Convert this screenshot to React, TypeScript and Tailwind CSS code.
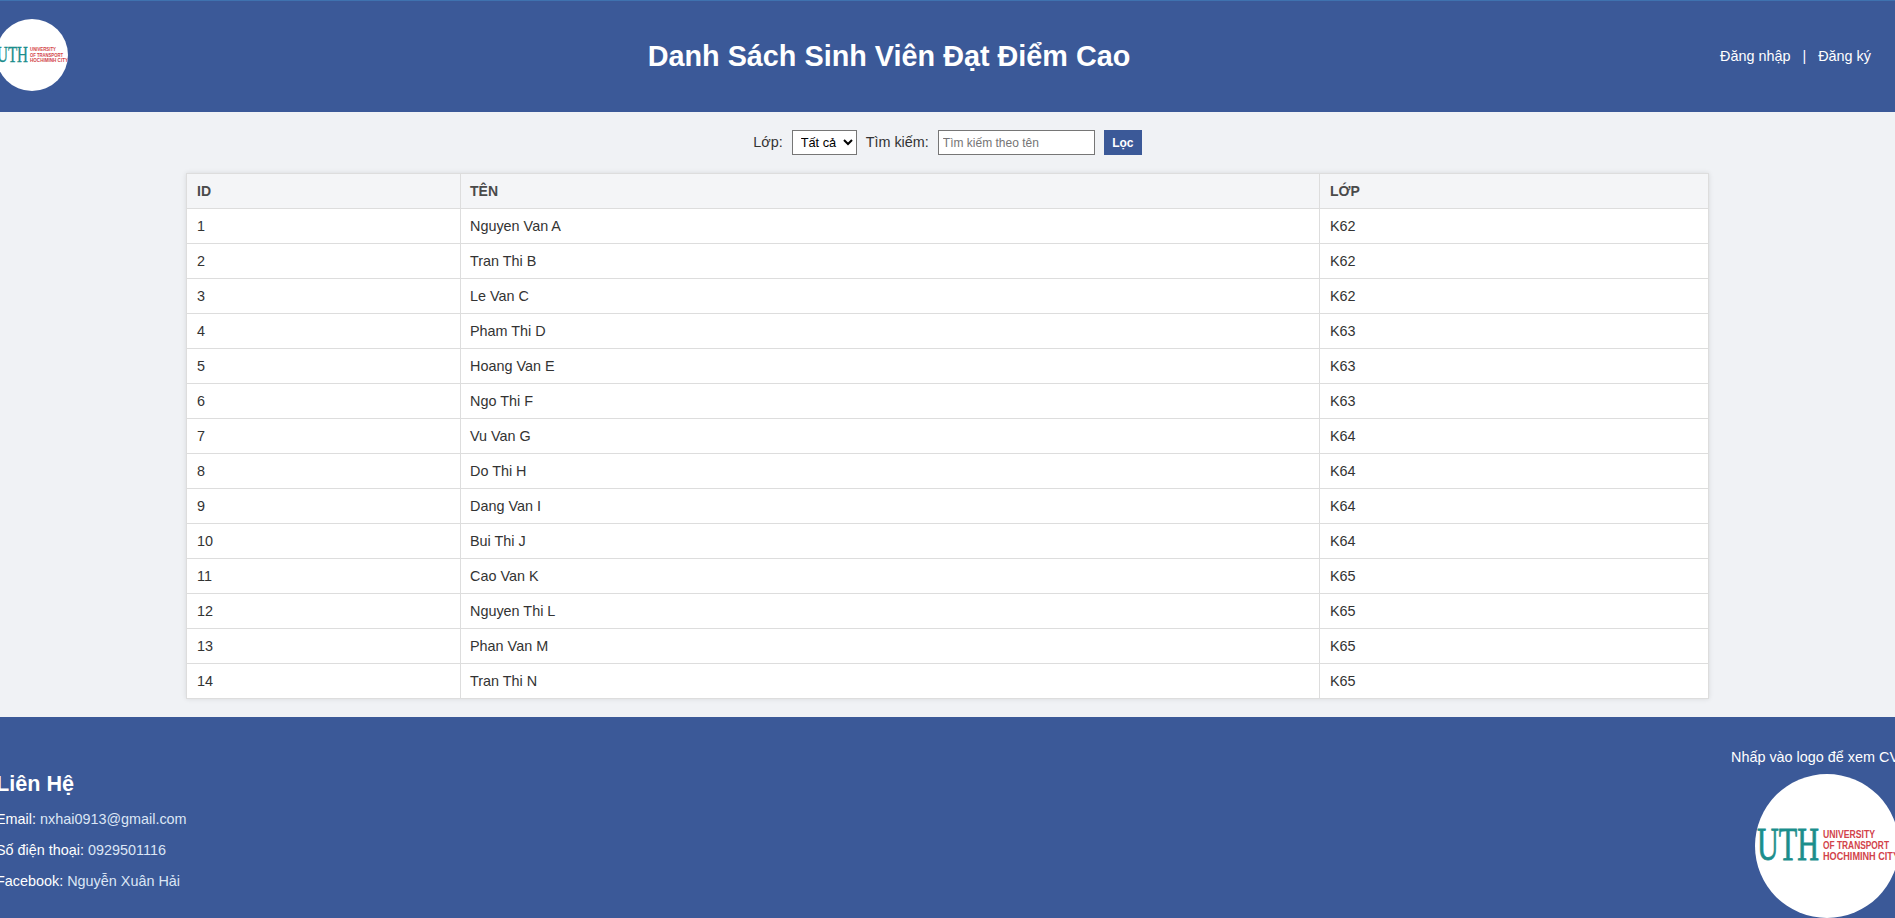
const students = [
  { id: 1, name: "Nguyen Van A", lop: "K62" },
  { id: 2, name: "Tran Thi B", lop: "K62" },
  { id: 3, name: "Le Van C", lop: "K62" },
  { id: 4, name: "Pham Thi D", lop: "K63" },
  { id: 5, name: "Hoang Van E", lop: "K63" },
  { id: 6, name: "Ngo Thi F", lop: "K63" },
  { id: 7, name: "Vu Van G", lop: "K64" },
  { id: 8, name: "Do Thi H", lop: "K64" },
  { id: 9, name: "Dang Van I", lop: "K64" },
  { id: 10, name: "Bui Thi J", lop: "K64" },
  { id: 11, name: "Cao Van K", lop: "K65" },
  { id: 12, name: "Nguyen Thi L", lop: "K65" },
  { id: 13, name: "Phan Van M", lop: "K65" },
  { id: 14, name: "Tran Thi N", lop: "K65" },
];

// logo UTH ve bang svg, van giu chu that
function Logo({ className }: { className: string }) {
  return (
    <svg viewBox="0 0 144 144" className={className}>
      <defs>
        <clipPath id="logo-clip">
          <circle cx="72" cy="72" r="72" />
        </clipPath>
      </defs>
      <circle cx="72" cy="72" r="72" fill="#fff" />
      <g clipPath="url(#logo-clip)">
        <text x="2" y="86" fontFamily="Liberation Serif" fontSize="46" fill="#1b8e8c" stroke="#1b8e8c" strokeWidth="0.8" textLength="62" lengthAdjust="spacingAndGlyphs">
          UTH
        </text>
        <g fontFamily="Liberation Sans" fontSize="11.5" fontWeight="700" fill="#d2434a">
          <text x="68" y="64" textLength="52" lengthAdjust="spacingAndGlyphs">UNIVERSITY</text>
          <text x="68" y="75" textLength="66" lengthAdjust="spacingAndGlyphs">OF TRANSPORT</text>
          <text x="68" y="86" textLength="76" lengthAdjust="spacingAndGlyphs">HOCHIMINH CITY</text>
        </g>
      </g>
    </svg>
  );
}

function App() {
  return (
    <div className="w-full overflow-hidden bg-[#f0f2f5] font-['Liberation_Sans',Arial,sans-serif] text-[14.4px] text-[#333]">
      <header className="flex h-[112px] items-center justify-between border-t border-[#3f72af] bg-[#3b5998] pr-6 text-white">
        <Logo className="-mt-[3px] -ml-1 h-[72px] w-[72px] shrink-0" />
        <h1 className="mr-[10px] text-[28.8px] font-bold">Danh Sách Sinh Viên Đạt Điểm Cao</h1>
        <nav className="flex gap-3">
          <a>Đăng nhập</a>
          <span>|</span>
          <a>Đăng ký</a>
        </nav>
      </header>

      <main>
        <form className="flex h-[61px] items-center justify-center gap-[9px]">
          <label>Lớp:</label>
          <select className="h-[25px] w-[65px] border border-[#767676] bg-white pl-1 text-[12.8px] text-black">
            <option>Tất cả</option>
          </select>
          <label>Tìm kiếm:</label>
          <input
            placeholder="Tìm kiếm theo tên"
            className="h-[25px] w-[157px] border border-[#767676] bg-white px-1 text-[12px] placeholder:text-[#757575]"
          />
          <button type="button" className="h-[25px] w-[38px] bg-[#3b5998] text-[12px] font-bold text-white">
            Lọc
          </button>
        </form>

        <table className="mx-auto w-[1523px] table-fixed border-collapse bg-white shadow-[0_0_5px_rgba(0,0,0,0.1)]">
          <thead>
            <tr className="h-[35px] bg-[#f4f5f7] text-[#4a4a4a]">
              <th className="w-[274px] border border-[#dddddd] pl-[10px] text-left text-[14px] font-bold">ID</th>
              <th className="w-[859px] border border-[#dddddd] pl-[9px] text-left text-[14px] font-bold">TÊN</th>
              <th className="border border-[#dddddd] pl-[10px] text-left text-[14px] font-bold">LỚP</th>
            </tr>
          </thead>
          <tbody>
            {students.map((s) => (
              <tr key={s.id} className="h-[35px]">
                <td className="border border-[#dddddd] pt-px pl-[10px]">{s.id}</td>
                <td className="border border-[#dddddd] pt-px pl-[9px]">{s.name}</td>
                <td className="border border-[#dddddd] pt-px pl-[10px]">{s.lop}</td>
              </tr>
            ))}
          </tbody>
        </table>
      </main>

      <footer className="mt-[18px] flex h-[201px] justify-between bg-[#3b5998] text-white">
        <div className="-ml-1 pt-[51px]">
          <h3 className="text-[21.6px] font-bold">Liên Hệ</h3>
          <p className="mt-[9px]">
            Email: <span className="text-[#dbe6f5]">nxhai0913@gmail.com</span>
          </p>
          <p className="mt-[9px]">
            Số điện thoại: <span className="text-[#dbe6f5]">0929501116</span>
          </p>
          <p className="mt-[9px]">
            Facebook: <span className="text-[#dbe6f5]">Nguyễn Xuân Hải</span>
          </p>
        </div>
        <div className="-mr-1 flex flex-col items-end pt-[30px]">
          <p>Nhấp vào logo để xem CV</p>
          <Logo className="mt-[5px] h-[144px] w-[144px] shrink-0" />
        </div>
      </footer>
    </div>
  );
}

export default App;
